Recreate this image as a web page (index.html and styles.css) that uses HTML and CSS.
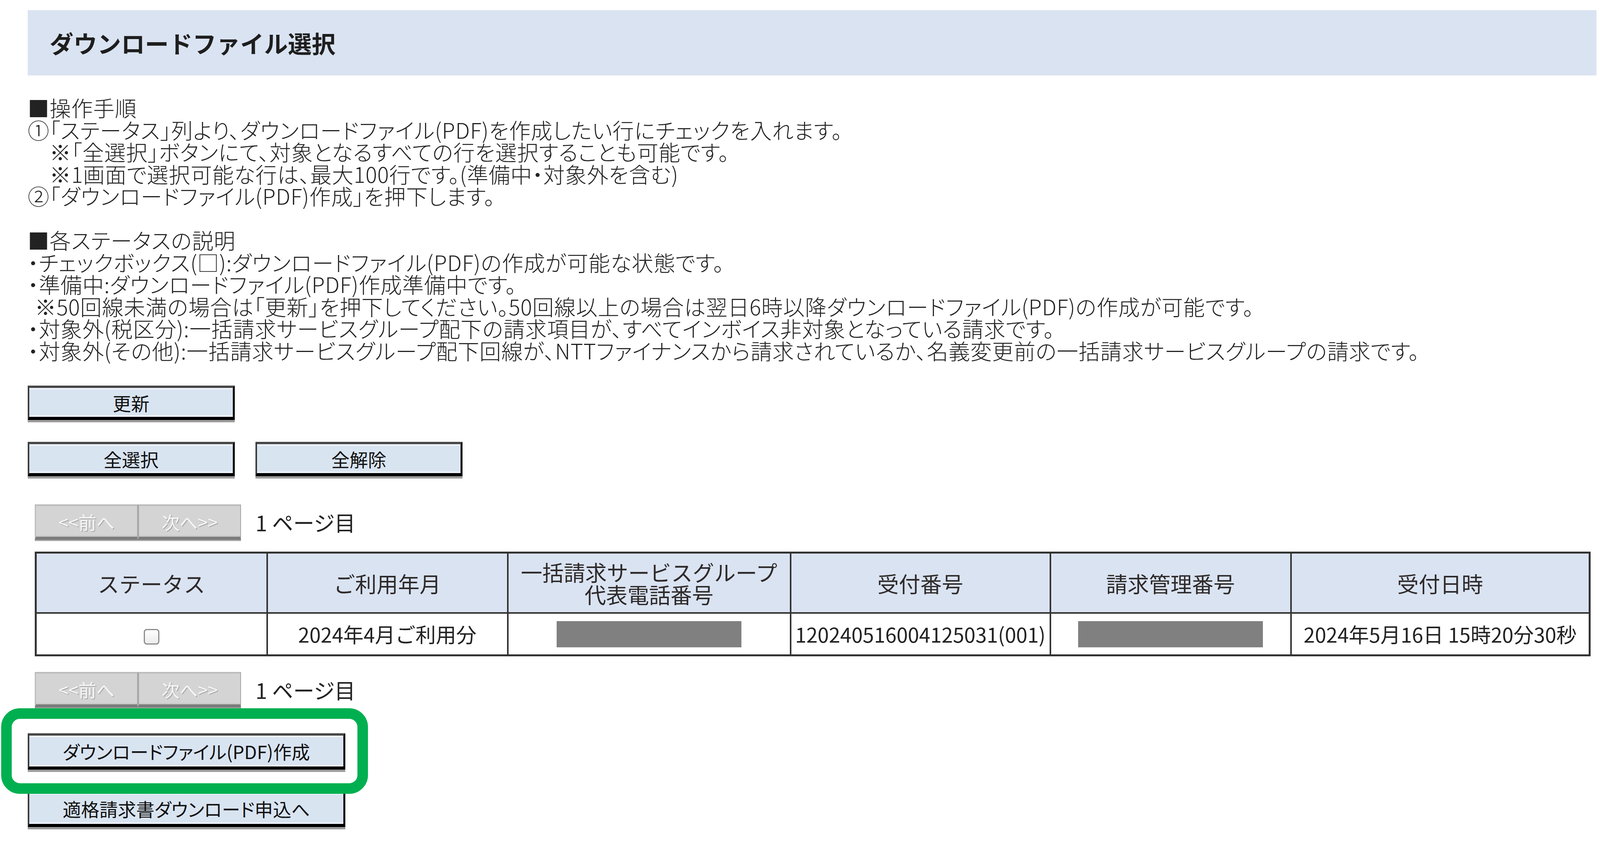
FILE: index.html
```html
<!DOCTYPE html>
<html lang="ja">
<head>
<meta charset="utf-8">
<title>ダウンロードファイル選択</title>
<link rel="stylesheet" href="styles.css">
</head>
<body>
<div class="page">
  <div class="title-bar"><h1 class="title">ダウンロードファイル選択</h1></div>

  <div class="guide">
    <p class="line">■操作手順</p>
    <p class="line">①「ステータス」列より、ダウンロードファイル(PDF)を作成したい行にチェックを入れます。</p>
    <p class="line">　※「全選択」ボタンにて、対象となるすべての行を選択することも可能です。</p>
    <p class="line">　※1画面で選択可能な行は、最大100行です。(準備中・対象外を含む)</p>
    <p class="line">②「ダウンロードファイル(PDF)作成」を押下します。</p>
    <p class="line"></p>
    <p class="line">■各ステータスの説明</p>
    <p class="line">・チェックボックス(□):ダウンロードファイル(PDF)の作成が可能な状態です。</p>
    <p class="line">・準備中:ダウンロードファイル(PDF)作成準備中です。</p>
    <p class="line"><span class="sp"></span>※50回線未満の場合は「更新」を押下してください。50回線以上の場合は翌日6時以降ダウンロードファイル(PDF)の作成が可能です。</p>
    <p class="line">・対象外(税区分):一括請求サービスグループ配下の請求項目が、すべてインボイス非対象となっている請求です。</p>
    <p class="line">・対象外(その他):一括請求サービスグループ配下回線が、NTTファイナンスから請求されているか、名義変更前の一括請求サービスグループの請求です。</p>
  </div>

  <div class="btn-row first"><button class="btn">更新</button></div>
  <div class="btn-row second"><button class="btn">全選択</button><button class="btn">全解除</button></div>

  <div class="pager top">
    <button class="pbtn prev" disabled>&lt;&lt;前へ</button><button class="pbtn next" disabled>次へ&gt;&gt;</button>
    <span class="page-no">1 ページ目</span>
  </div>

  <table class="grid">
    <colgroup>
      <col class="c1"><col class="c2"><col class="c3"><col class="c4"><col class="c5"><col class="c6">
    </colgroup>
    <thead>
      <tr>
        <th>ステータス</th>
        <th>ご利用年月</th>
        <th>一括請求サービスグループ<br>代表電話番号</th>
        <th>受付番号</th>
        <th>請求管理番号</th>
        <th>受付日時</th>
      </tr>
    </thead>
    <tbody>
      <tr>
        <td><span class="check"></span></td>
        <td>2024年4月ご利用分</td>
        <td><span class="redact"></span></td>
        <td>120240516004125031(001)</td>
        <td><span class="redact"></span></td>
        <td>2024年5月16日 15時20分30秒</td>
      </tr>
    </tbody>
  </table>

  <div class="pager bottom">
    <button class="pbtn prev" disabled>&lt;&lt;前へ</button><button class="pbtn next" disabled>次へ&gt;&gt;</button>
    <span class="page-no">1 ページ目</span>
  </div>

  <div class="dl-wrap">
    <button class="btn wide">ダウンロードファイル(PDF)作成</button>
    <div class="highlight"></div>
  </div>
  <div class="btn-row last"><button class="btn wide">適格請求書ダウンロード申込へ</button></div>
</div>
</body>
</html>
```

FILE: styles.css
```css
html, body {
  margin: 0;
  padding: 0;
  background: #ffffff;
}

body {
  font-family: "Noto Sans CJK JP", "Noto Sans", sans-serif;
  color: #222222;
}

.page {
  padding: 26px 9px 30px 71px;
}

.title-bar {
  box-sizing: border-box;
  height: 167px;
  background: #dae3f1;
  display: flex;
  align-items: center;
  padding-left: 56px;
}

.title {
  margin: 0;
  font-size: 61px;
  font-weight: 700;
  line-height: 1;
  color: #1e1e1e;
}

.guide {
  margin-top: 53px;
  font-size: 55px;
  font-weight: 300;
  letter-spacing: 0.8px;
  line-height: 56.5px;
  font-feature-settings: "palt";
}

.line {
  margin: 0;
  height: 56.5px;
  white-space: nowrap;
}

.sp {
  display: inline-block;
  width: 18px;
}

.btn-row {
  display: flex;
  gap: 53px;
}

.btn-row.first { margin-top: 63px; }
.btn-row.second { margin-top: 56px; }
.btn-row.last { margin-top: 54px; }

.btn {
  box-sizing: border-box;
  width: 530px;
  height: 88px;
  padding: 0;
  background: #d9e4f1;
  border-style: solid;
  border-width: 6px 5px 8px 4px;
  border-color: #484848 #000000 #000000 #3a3a3a;
  box-shadow: 0 6px 0 #9c9c9c, inset 0 4px 0 #eef3fa, inset 0 -4px 0 #eef3fa;
  font-family: "Noto Sans CJK JP", "Noto Sans", sans-serif;
  font-size: 47px;
  line-height: 1;
  color: #111111;
  font-feature-settings: "palt";
}

.btn.wide {
  width: 813px;
  height: 93px;
}

.pager {
  display: flex;
  align-items: center;
  margin-left: 18px;
}

.pager.top { margin-top: 72px; }
.pager.bottom { margin-top: 40px; }

.pbtn {
  box-sizing: border-box;
  width: 264px;
  height: 91px;
  padding: 0;
  background: #d4d4d4;
  border-style: solid;
  border-width: 4px 2px 8px 3px;
  border-color: #bcbcbc #a6a6a6 #7c7c7c #bcbcbc;
  box-shadow: 0 3px 0 #ababab, inset 0 -3px 0 #c6c6c6;
  font-family: "Noto Sans CJK JP", "Noto Sans", sans-serif;
  font-size: 46px;
  line-height: 1;
  color: #f6f6f6;
  text-shadow: 2px 2px 0 #a9a9a9;
  font-feature-settings: "palt";
}

.pbtn.next {
  border-left-color: #a9a9a9;
}

.page-no {
  margin-left: 37px;
  font-size: 54px;
  color: #222222;
  font-feature-settings: "palt";
}

.grid {
  margin-top: 30px;
  margin-left: 18px;
  width: 3978px;
  table-layout: fixed;
  border-collapse: collapse;
  border: 5px solid #333333;
}

.c1 { width: 592px; }
.c2 { width: 616px; }
.c3 { width: 724px; }
.c4 { width: 665px; }
.c5 { width: 616px; }
.c6 { width: 765px; }

.grid th,
.grid td {
  border: 4px solid #333333;
  padding: 0;
  text-align: center;
  vertical-align: middle;
  white-space: nowrap;
}

.grid th {
  height: 150px;
  background: #dae3f1;
  font-weight: 400;
  font-size: 55px;
  line-height: 57px;
  color: #2e2a2a;
}

.grid td {
  height: 104px;
  background: #ffffff;
  font-size: 52px;
  line-height: 1;
  color: #222222;
}

.check {
  display: inline-block;
  box-sizing: border-box;
  width: 40px;
  height: 40px;
  vertical-align: middle;
  border: 3px solid #8c8c8c;
  border-radius: 8px;
  background: linear-gradient(#ffffff, #ececec);
}

.redact {
  display: inline-block;
  width: 473px;
  height: 67px;
  vertical-align: middle;
  background: #808080;
}

.dl-wrap {
  position: relative;
  width: 813px;
  margin-top: 66px;
}

.dl-wrap .btn {
  display: block;
}

.highlight {
  position: absolute;
  left: -68px;
  top: -64px;
  right: -58px;
  bottom: -62px;
  border: 27px solid #00b050;
  border-radius: 48px;
  pointer-events: none;
}
```
